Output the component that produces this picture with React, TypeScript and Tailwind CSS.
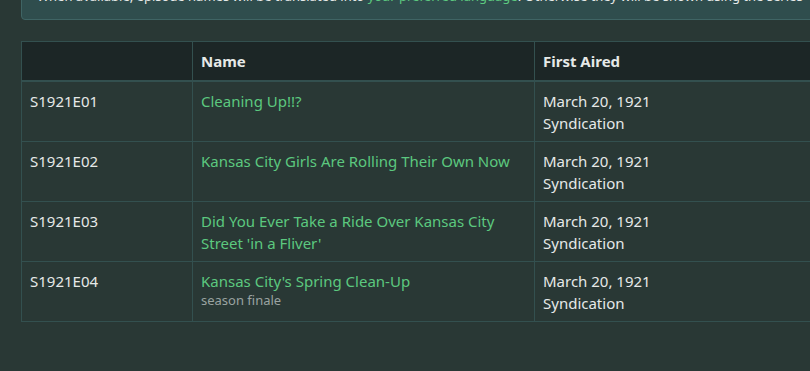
const episodes = [
  { code: 'S1921E01', name: 'Cleaning Up!!?', aired: 'March 20, 1921', network: 'Syndication' },
  { code: 'S1921E02', name: 'Kansas City Girls Are Rolling Their Own Now', aired: 'March 20, 1921', network: 'Syndication' },
  { code: 'S1921E03', name: "Did You Ever Take a Ride Over Kansas City Street 'in a Fliver'", aired: 'March 20, 1921', network: 'Syndication' },
  { code: 'S1921E04', name: "Kansas City's Spring Clean-Up", note: 'season finale', aired: 'March 20, 1921', network: 'Syndication' },
];

export default function App() {
  return (
    <div
      className="w-[810px] h-[371px] overflow-hidden bg-[#293835] text-[#e6e9e8]"
      style={{ fontFamily: '"Noto Sans", "Open Sans", sans-serif' }}
    >
      <div className="pl-[21px]">
        <div className="-mt-[20px] w-[820px] rounded-[4px] border border-[#3f6464] bg-[#2f4d4d] pl-[15px] pt-[5px] pb-[13px] text-[13px] leading-[20px] whitespace-nowrap">
          When available, episode names will be translated into{' '}
          <a className="text-[#5cc87f]">your preferred language</a>. Otherwise they will be shown using the series' original language.
        </div>

        <table className="mt-[21px] w-[820px] table-fixed border-collapse text-[15px] leading-[22px]">
          <colgroup>
            <col className="w-[171px]" />
            <col className="w-[342px]" />
            <col />
          </colgroup>
          <thead>
            <tr className="bg-[#1c2626]">
              <th className="border border-b-2 border-[#33504f] px-2 py-2 text-left font-bold"></th>
              <th className="border border-b-2 border-[#33504f] px-2 py-2 text-left font-bold">Name</th>
              <th className="border border-b-2 border-[#33504f] px-2 py-2 text-left font-bold">First Aired</th>
            </tr>
          </thead>
          <tbody>
            {episodes.map(ep => (
              <tr key={ep.code}>
                <td className="border border-[#33504f] px-2 pt-2 pb-[7px] align-top">{ep.code}</td>
                <td className="border border-[#33504f] px-2 pt-2 pb-[7px] align-top">
                  <a className="text-[#5cc87f]">{ep.name}</a>
                  {ep.note && <div className="text-[13px] leading-[16px] text-[#9aa3a1]">{ep.note}</div>}
                </td>
                <td className="border border-[#33504f] px-2 pt-2 pb-[7px] align-top">
                  <div>{ep.aired}</div>
                  <div>{ep.network}</div>
                </td>
              </tr>
            ))}
          </tbody>
        </table>
      </div>
    </div>
  );
}
